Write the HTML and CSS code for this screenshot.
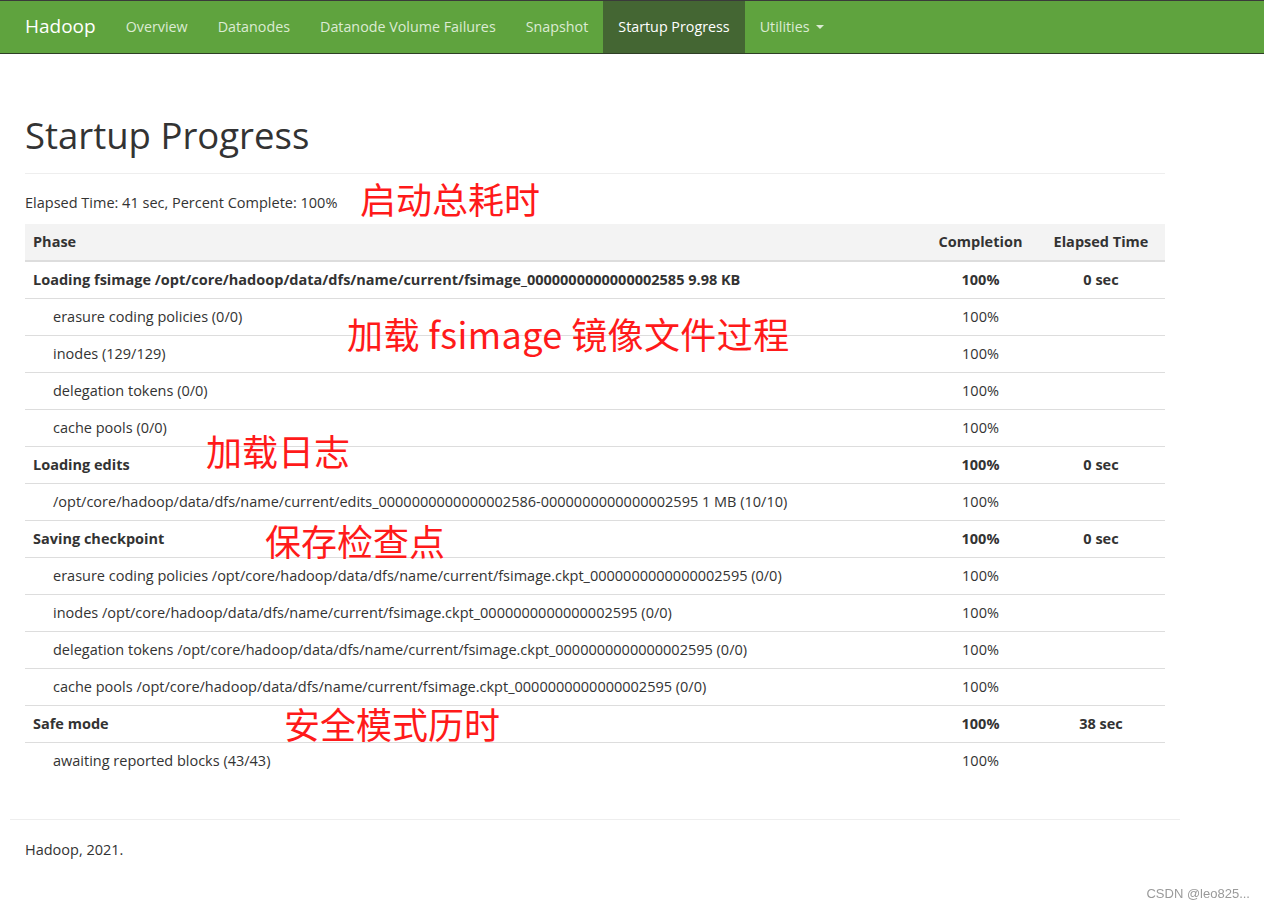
FILE: index.html
```html
<!DOCTYPE html>
<html>
<head>
<meta charset="utf-8">
<link rel="stylesheet" href="styles.css">
</head>
<body>
<nav class="navbar">
  <div class="nav-inner">
    <a class="brand">Hadoop</a>
    <ul class="nav">
      <li><a>Overview</a></li>
      <li><a>Datanodes</a></li>
      <li><a>Datanode Volume Failures</a></li>
      <li><a>Snapshot</a></li>
      <li class="active"><a>Startup Progress</a></li>
      <li><a>Utilities <span class="caret"></span></a></li>
    </ul>
  </div>
</nav>

<div class="container">
  <div class="page-header"><h1>Startup Progress</h1></div>
  <p class="elapsed">Elapsed Time: 41 sec, Percent Complete: 100%</p>
  <table class="progress">
    <thead>
      <tr><th class="phase">Phase</th><th class="comp">Completion</th><th class="time">Elapsed Time</th></tr>
    </thead>
    <tbody>
      <tr class="phase-row"><td>Loading fsimage /opt/core/hadoop/data/dfs/name/current/fsimage_0000000000000002585 9.98 KB</td><td class="comp">100%</td><td class="time">0 sec</td></tr>
      <tr class="step"><td>erasure coding policies (0/0)</td><td class="comp">100%</td><td class="time"></td></tr>
      <tr class="step"><td>inodes (129/129)</td><td class="comp">100%</td><td class="time"></td></tr>
      <tr class="step"><td>delegation tokens (0/0)</td><td class="comp">100%</td><td class="time"></td></tr>
      <tr class="step"><td>cache pools (0/0)</td><td class="comp">100%</td><td class="time"></td></tr>
      <tr class="phase-row"><td>Loading edits</td><td class="comp">100%</td><td class="time">0 sec</td></tr>
      <tr class="step"><td>/opt/core/hadoop/data/dfs/name/current/edits_0000000000000002586-0000000000000002595 1 MB (10/10)</td><td class="comp">100%</td><td class="time"></td></tr>
      <tr class="phase-row"><td>Saving checkpoint</td><td class="comp">100%</td><td class="time">0 sec</td></tr>
      <tr class="step"><td>erasure coding policies /opt/core/hadoop/data/dfs/name/current/fsimage.ckpt_0000000000000002595 (0/0)</td><td class="comp">100%</td><td class="time"></td></tr>
      <tr class="step"><td>inodes /opt/core/hadoop/data/dfs/name/current/fsimage.ckpt_0000000000000002595 (0/0)</td><td class="comp">100%</td><td class="time"></td></tr>
      <tr class="step"><td>delegation tokens /opt/core/hadoop/data/dfs/name/current/fsimage.ckpt_0000000000000002595 (0/0)</td><td class="comp">100%</td><td class="time"></td></tr>
      <tr class="step"><td>cache pools /opt/core/hadoop/data/dfs/name/current/fsimage.ckpt_0000000000000002595 (0/0)</td><td class="comp">100%</td><td class="time"></td></tr>
      <tr class="phase-row"><td>Safe mode</td><td class="comp">100%</td><td class="time">38 sec</td></tr>
      <tr class="step"><td>awaiting reported blocks (43/43)</td><td class="comp">100%</td><td class="time"></td></tr>
    </tbody>
  </table>

  <span class="note note-1">启动总耗时</span>
  <span class="note note-2">加载 fsimage 镜像文件过程</span>
  <span class="note note-3">加载日志</span>
  <span class="note note-4">保存检查点</span>
  <span class="note note-5">安全模式历时</span>
</div>

<footer class="footer">
  <p>Hadoop, 2021.</p>
</footer>

<div class="watermark">CSDN @leo825...</div>
</body>
</html>
```

FILE: styles.css
```css
* { box-sizing: border-box; }

html, body {
  margin: 0;
  padding: 0;
  background: #fff;
}

body {
  font-family: "Open Sans", "Noto Sans", "Noto Sans CJK SC", sans-serif;
  font-size: 14.5px;
  line-height: 1.42857;
  color: #333;
}

/* Navbar */
.navbar {
  background: #5fa33e;
  border-top: 1px solid #3a3a3a;
  border-bottom: 1px solid #2f3f27;
  height: 54px;
}

.nav-inner {
  width: 1170px;
  margin-left: 10px;
  display: flex;
  align-items: stretch;
  height: 52px;
}

.brand {
  color: #fff;
  font-size: 19px;
  padding: 0 15px;
  display: flex;
  align-items: center;
}

.nav {
  list-style: none;
  margin: 0;
  padding: 0;
  display: flex;
}

.nav li {
  display: flex;
}

.nav li a {
  display: flex;
  align-items: center;
  padding: 0 15px;
  color: #dcebd3;
  font-size: 14.3px;
}

.nav li.active a {
  background: #446633;
  color: #fff;
}

.caret {
  display: inline-block;
  width: 0;
  height: 0;
  margin-left: 6px;
  border-top: 4px solid #dcebd3;
  border-left: 4px solid transparent;
  border-right: 4px solid transparent;
}

/* Content */
.container {
  position: relative;
  width: 1170px;
  margin-left: 10px;
  padding: 61px 15px 0;
}

.page-header {
  margin: 0 0 19px;
  padding-bottom: 18px;
  border-bottom: 1px solid #eee;
}

.page-header h1 {
  margin: 0;
  font-size: 36.5px;
  font-weight: 400;
  line-height: 1.1;
}

.elapsed {
  margin: 0 0 10px;
}

table.progress {
  width: 100%;
  border-collapse: collapse;
  border-spacing: 0;
}

table.progress th,
table.progress td {
  padding: 8px;
  height: 37px;
  line-height: 20px;
  text-align: left;
  vertical-align: middle;
}

table.progress thead th {
  background: #f3f3f3;
  border-bottom: 2px solid #ddd;
  font-weight: 700;
}

table.progress tbody tr + tr td {
  border-top: 1px solid #ddd;
}

table.progress .comp {
  width: 113px;
  text-align: center;
}

table.progress .time {
  width: 128px;
  text-align: center;
}

.phase-row td {
  font-weight: 700;
}

.step td:first-child {
  padding-left: 28px;
}

/* Annotations */
.note {
  position: absolute;
  color: #ff1a1a;
  font-family: "Noto Sans CJK SC", "Noto Sans", sans-serif;
  font-size: 36px;
  line-height: 1;
  white-space: nowrap;
}

.note-1 { left: 350px; top: 126px; }
.note-2 { left: 337px; top: 261px; letter-spacing: 0.4px; }
.note-3 { left: 196px; top: 378px; }
.note-4 { left: 255px; top: 468px; }
.note-5 { left: 274px; top: 651px; }

/* Footer */
.footer {
  width: 1170px;
  margin: 40px 0 0 10px;
  border-top: 1px solid #eee;
  padding: 20px 15px;
}

.footer p {
  margin: 0;
}

.watermark {
  position: fixed;
  right: 14px;
  bottom: 6px;
  font-family: "Liberation Sans", Arial, sans-serif;
  font-size: 13px;
  color: #9a9a9a;
}
```
